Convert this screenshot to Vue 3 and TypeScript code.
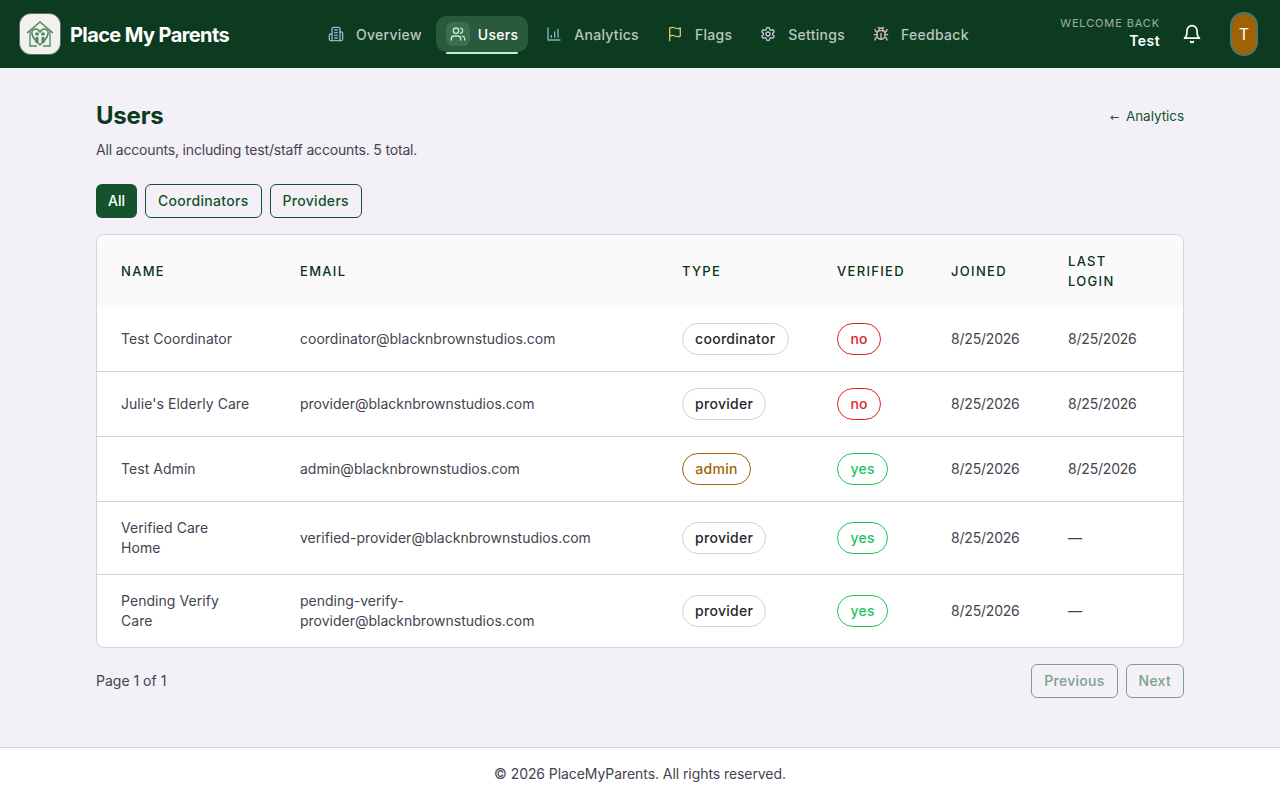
<script setup lang="ts">
interface U { name: string; email: string; type: string; verified: string; joined: string; last: string }
const users: U[] = [
  { name: 'Test Coordinator', email: 'coordinator@blacknbrownstudios.com', type: 'coordinator', verified: 'no', joined: '8/25/2026', last: '8/25/2026' },
  { name: "Julie's Elderly Care", email: 'provider@blacknbrownstudios.com', type: 'provider', verified: 'no', joined: '8/25/2026', last: '8/25/2026' },
  { name: 'Test Admin', email: 'admin@blacknbrownstudios.com', type: 'admin', verified: 'yes', joined: '8/25/2026', last: '8/25/2026' },
  { name: 'Verified Care Home', email: 'verified-provider@blacknbrownstudios.com', type: 'provider', verified: 'yes', joined: '8/25/2026', last: '—' },
  { name: 'Pending Verify Care', email: 'pending-verify-provider@blacknbrownstudios.com', type: 'provider', verified: 'yes', joined: '8/25/2026', last: '—' },
]
const heads = ['Name', 'Email', 'Type', 'Verified', 'Joined', 'Last login']
const widths = [179, 382, 155, 114, 117, 139]
</script>

<template>
  <div class="page">
    <header class="top">
      <div class="brand">
        <div class="logo">
          <svg width="30" height="30" viewBox="0 0 30 30" fill="none" stroke="#4f8560" stroke-width="1.3">
            <path d="M2 14 L15 3 L28 14" stroke-width="1.5" />
            <path d="M5 12 V27 H12 M25 12 V27 H18" />
            <path d="M15 13 C12 8 6 10 7 15 C8 20 12 23 15 26 C18 23 22 20 23 15 C24 10 18 8 15 13 Z" stroke-width="1.5" />
            <circle cx="12" cy="15" r="1.8" fill="#4f8560" stroke="none" />
            <circle cx="18" cy="15" r="1.8" fill="#4f8560" stroke="none" />
            <path d="M10.5 18 H13.5 V24 H10.5 Z M16.5 18 H19.5 V24 H16.5 Z" fill="#4f8560" stroke="none" />
          </svg>
        </div>
        <span class="brand-name">Place My Parents</span>
      </div>
      <nav class="nav">
        <a class="item">
          <span class="ic"><svg width="16" height="16" viewBox="0 0 24 24" fill="none" stroke="#8fb3d0" stroke-width="2" stroke-linecap="round" stroke-linejoin="round"><path d="M6 22V4a2 2 0 0 1 2-2h8a2 2 0 0 1 2 2v18Z"/><path d="M6 12H4a2 2 0 0 0-2 2v6a2 2 0 0 0 2 2h2"/><path d="M18 9h2a2 2 0 0 1 2 2v9a2 2 0 0 1-2 2h-2"/><path d="M10 6h4M10 10h4M10 14h4M10 18h4"/></svg></span>
          <span>Overview</span>
        </a>
        <a class="item active">
          <span class="ic"><svg width="16" height="16" viewBox="0 0 24 24" fill="none" stroke="#bbf0cb" stroke-width="2" stroke-linecap="round" stroke-linejoin="round"><path d="M16 21v-2a4 4 0 0 0-4-4H6a4 4 0 0 0-4 4v2"/><circle cx="9" cy="7" r="4"/><path d="M22 21v-2a4 4 0 0 0-3-3.87"/><path d="M16 3.13a4 4 0 0 1 0 7.75"/></svg></span>
          <span>Users</span>
          <i class="underline"></i>
        </a>
        <a class="item">
          <span class="ic"><svg width="16" height="16" viewBox="0 0 24 24" fill="none" stroke="#7fb5c4" stroke-width="2" stroke-linecap="round" stroke-linejoin="round"><path d="M3 3v18h18"/><path d="M13 17V9M18 17V5M8 17v-3"/></svg></span>
          <span>Analytics</span>
        </a>
        <a class="item">
          <span class="ic"><svg width="16" height="16" viewBox="0 0 24 24" fill="none" stroke="#d8c76a" stroke-width="2" stroke-linecap="round" stroke-linejoin="round"><path d="M4 15s1-1 4-1 5 2 8 2 4-1 4-1V3s-1 1-4 1-5-2-8-2-4 1-4 1z"/><path d="M4 22v-7"/></svg></span>
          <span>Flags</span>
        </a>
        <a class="item">
          <span class="ic"><svg width="16" height="16" viewBox="0 0 24 24" fill="none" stroke="#c3c6d8" stroke-width="2" stroke-linecap="round" stroke-linejoin="round"><path d="M12.22 2h-.44a2 2 0 0 0-2 2v.18a2 2 0 0 1-1 1.73l-.43.25a2 2 0 0 1-2 0l-.15-.08a2 2 0 0 0-2.73.73l-.22.38a2 2 0 0 0 .73 2.73l.15.1a2 2 0 0 1 1 1.72v.51a2 2 0 0 1-1 1.74l-.15.09a2 2 0 0 0-.73 2.73l.22.38a2 2 0 0 0 2.73.73l.15-.08a2 2 0 0 1 2 0l.43.25a2 2 0 0 1 1 1.73V20a2 2 0 0 0 2 2h.44a2 2 0 0 0 2-2v-.18a2 2 0 0 1 1-1.73l.43-.25a2 2 0 0 1 2 0l.15.08a2 2 0 0 0 2.73-.73l.22-.39a2 2 0 0 0-.73-2.73l-.15-.08a2 2 0 0 1-1-1.74v-.5a2 2 0 0 1 1-1.74l.15-.09a2 2 0 0 0 .73-2.73l-.22-.38a2 2 0 0 0-2.73-.73l-.15.08a2 2 0 0 1-2 0l-.43-.25a2 2 0 0 1-1-1.73V4a2 2 0 0 0-2-2z"/><circle cx="12" cy="12" r="3"/></svg></span>
          <span>Settings</span>
        </a>
        <a class="item">
          <span class="ic"><svg width="16" height="16" viewBox="0 0 24 24" fill="none" stroke="#dcb9c6" stroke-width="2" stroke-linecap="round" stroke-linejoin="round"><path d="m8 2 1.88 1.88M14.12 3.88 16 2M9 7.13v-1a3.003 3.003 0 1 1 6 0v1"/><path d="M12 20c-3.3 0-6-2.7-6-6v-3a4 4 0 0 1 4-4h4a4 4 0 0 1 4 4v3c0 3.3-2.7 6-6 6"/><path d="M12 20v-9M6.53 9C4.6 8.8 3 7.1 3 5M6 13H2M3 21c0-2.1 1.7-3.9 3.8-4M20.97 5c0 2.1-1.6 3.8-3.5 4M22 13h-4M17.2 17c2.1.1 3.8 1.9 3.8 4"/></svg></span>
          <span>Feedback</span>
        </a>
      </nav>
      <div class="right">
        <div class="welcome">
          <span class="wb">WELCOME BACK</span>
          <span class="wn">Test</span>
        </div>
        <svg class="bell" width="20" height="20" viewBox="0 0 24 24" fill="none" stroke="#fff" stroke-width="2" stroke-linecap="round" stroke-linejoin="round"><path d="M6 8a6 6 0 0 1 12 0c0 7 3 9 3 9H3s3-2 3-9"/><path d="M10.3 21a1.94 1.94 0 0 0 3.4 0"/></svg>
        <div class="avatar">T</div>
      </div>
    </header>

    <main class="main">
      <div class="head">
        <h1>Users</h1>
        <a class="back"><span class="arr">←</span>Analytics</a>
      </div>
      <p class="sub">All accounts, including test/staff accounts. 5 total.</p>
      <div class="filters">
        <button class="btn on">All</button>
        <button class="btn">Coordinators</button>
        <button class="btn">Providers</button>
      </div>
      <div class="card">
        <table>
          <colgroup><col v-for="w in widths" :key="w" :style="{ width: w + 'px' }" /></colgroup>
          <thead>
            <tr><th v-for="h in heads" :key="h">{{ h }}</th></tr>
          </thead>
          <tbody>
            <tr v-for="u in users" :key="u.email">
              <td class="nm">{{ u.name }}</td>
              <td>{{ u.email }}</td>
              <td><span class="pill" :class="u.type === 'admin' ? 'admin' : 'plain'">{{ u.type }}</span></td>
              <td><span class="pill" :class="u.verified">{{ u.verified }}</span></td>
              <td class="dt">{{ u.joined }}</td>
              <td class="dt">{{ u.last }}</td>
            </tr>
          </tbody>
        </table>
      </div>
      <div class="pager">
        <span class="ptext">Page 1 of 1</span>
        <div class="pbtns">
          <button class="btn dis">Previous</button>
          <button class="btn dis">Next</button>
        </div>
      </div>
    </main>

    <footer class="foot">© 2026 PlaceMyParents. All rights reserved.</footer>
  </div>
</template>

<style>
html, body { margin: 0; background: #f3f1f7; }
</style>

<style scoped>
.page { width: 1280px; height: 800px; display: flex; flex-direction: column; background: #f3f1f7; font-family: Inter, "Liberation Sans", sans-serif; color: #45434f; font-size: 14px; overflow: hidden; }
.top { height: 68px; flex: none; background: #0d3b20; display: flex; align-items: center; padding: 0 22px 0 20px; box-sizing: border-box; position: relative; }
.brand { display: flex; align-items: center; gap: 10px; }
.logo { width: 40px; height: 40px; border-radius: 11px; background: #f3f1ed; display: flex; align-items: center; justify-content: center; box-shadow: 0 0 0 1px rgba(255,255,255,.3); }
.brand-name { font-size: 20px; font-weight: 700; color: #fff; letter-spacing: -0.6px; line-height: 28px; white-space: nowrap; position: relative; top: 1px; }
.nav { position: absolute; left: 314px; top: 16px; display: flex; gap: 4px; }
.item { position: relative; display: flex; align-items: center; gap: 8px; height: 36px; padding: 0 10px; border-radius: 10px; font-weight: 500; letter-spacing: 0.28px; color: rgba(255,255,255,.72); white-space: nowrap; }
.ic { width: 24px; height: 24px; border-radius: 7px; display: flex; align-items: center; justify-content: center; }
.active { background: #2a5a3c; color: #fff; }
.active .ic { background: #3c6e50; }
.underline { position: absolute; left: 10px; right: 10px; bottom: -2px; height: 2px; background: #bbf0cb; border-radius: 1px; }
.right { margin-left: auto; display: flex; align-items: center; }
.welcome { display: flex; flex-direction: column; align-items: flex-end; margin-right: 22px; margin-bottom: 2px; }
.wb { font-size: 11px; line-height: 16px; letter-spacing: 0.88px; color: rgba(255,255,255,.6); }
.wn { font-size: 14px; line-height: 20px; font-weight: 600; color: #fff; letter-spacing: 0.42px; }
.bell { margin-right: 28px; }
.avatar { width: 28px; height: 44px; box-sizing: border-box; border-radius: 14px; background: #a16207; background-clip: padding-box; border: 2px solid rgba(255,255,255,.3); color: #fff; font-size: 16px; font-weight: 400; display: flex; align-items: center; justify-content: center; }
.main { flex: 1; padding: 32px 96px 0; box-sizing: border-box; }
.head { display: flex; justify-content: space-between; align-items: center; height: 32px; }
h1 { margin: 0; font-size: 24px; line-height: 32px; font-weight: 700; color: #0d3b20; letter-spacing: -0.2px; }
.back { color: #14532d; font-size: 13.5px; line-height: 20px; letter-spacing: -0.05px; position: relative; top: 1px; }
.arr { font-family: "DejaVu Sans", sans-serif; font-size: 11px; margin-right: 7px; }
.sub { margin: 8px 0 0; line-height: 20px; height: 20px; letter-spacing: -0.17px; }
.filters { display: flex; gap: 8px; margin-top: 24px; }
.btn { height: 34px; padding: 0 12px 1px; box-sizing: border-box; border: 1px solid #14532d; border-radius: 6px; background: transparent; color: #14532d; font-family: inherit; font-size: 14px; font-weight: 500; letter-spacing: 0.3px; }
.btn.on { background: #14532d; color: #fff; border: none; letter-spacing: 0; }
.btn.dis { border-color: #7f9f8c; color: #7f9f8c; letter-spacing: 0.28px; }
.card { margin-top: 16px; border: 1px solid #d4d2dc; border-radius: 8px; background: #fff; overflow: hidden; }
table { width: 1086px; table-layout: fixed; border-collapse: collapse; }
th { height: 72px; padding: 16px 24px; box-sizing: border-box; background: #fafafa; text-align: left; font-size: 13px; line-height: 20px; font-weight: 500; letter-spacing: 1.3px; text-transform: uppercase; color: #0a3319; }
th:last-child { padding-right: 40px; }
td { padding: 16px 24px; line-height: 20px; border-top: 1px solid #d4d2dc; vertical-align: middle; }
tbody tr:first-child td { border-top: none; }
td.nm { letter-spacing: 0.05px; padding-right: 26px; }
.dt { letter-spacing: -0.2px; }
.pill { display: inline-flex; align-items: center; height: 32px; padding: 0 12px; box-sizing: border-box; border: 1px solid; border-radius: 16px; font-weight: 500; letter-spacing: 0.3px; vertical-align: middle; }
.plain { border-color: #d4d4d8; color: #27272a; }
.admin { border-color: #a16207; color: #a16207; padding: 0 12.3px; }
.no { border-color: #dc2626; color: #dc2626; padding: 0 12.4px; }
.yes { border-color: #22c55e; color: #22c55e; padding: 0 12.4px; }
.pager { display: flex; justify-content: space-between; align-items: center; margin-top: 16px; }
.ptext { margin-bottom: 1px; }
.pbtns { display: flex; gap: 8px; }
.foot { height: 53px; flex: none; box-sizing: border-box; border-top: 1px solid #d4d2dc; background: #fff; display: flex; align-items: center; justify-content: center; letter-spacing: -0.07px; padding-bottom: 1px; }
</style>
